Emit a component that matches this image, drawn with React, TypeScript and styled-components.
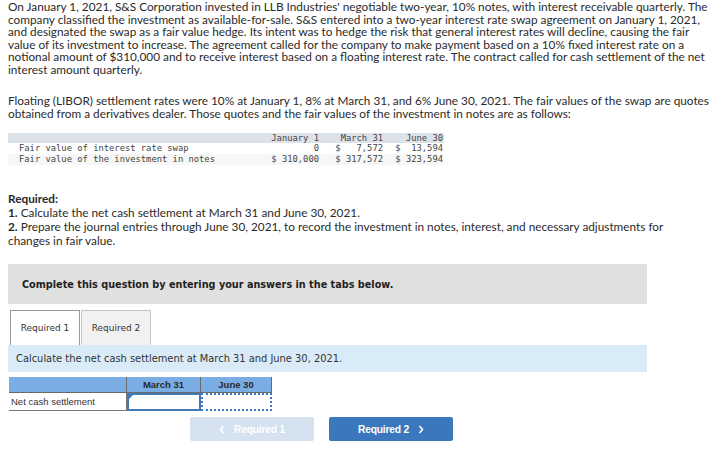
import React from "react";
import styled, { createGlobalStyle } from "styled-components";

const Global = createGlobalStyle`
  html, body { margin: 0; padding: 0; background: #fff; }
  body { font-family: Lato, "Open Sans", sans-serif; color: #2b2b2b; }
`;

const Page = styled.div`
  width: 725px;
  height: 459px;
  overflow: hidden;
  padding: 1px 8px 0 8px;
  box-sizing: border-box;
`;

const Para = styled.p<{ $mt?: number; $lh?: number }>`
  margin: ${(p) => p.$mt ?? 0}px 0 0 0;
  font-size: 11.8px;
  line-height: ${(p) => p.$lh ?? 12.5}px;
  white-space: nowrap;
`;

const DataTable = styled.table`
  margin-top: 13px;
  border-collapse: collapse;
  border-spacing: 0;
  table-layout: fixed;
  width: 436px;
  font-family: "DejaVu Sans Mono", monospace;
  font-size: 8.8px;
  color: #444;
`;

const HeadRow = styled.tr`
  background: #dde1ea;
`;

const BodyRow = styled.tr<{ $alt?: boolean }>`
  background: ${(p) => (p.$alt ? "#f7f7f7" : "#fff")};
`;

const Cell = styled.td<{ $left?: boolean; $h?: number }>`
  padding: 0 ${(p) => (p.$left ? 0 : 1)}px 0 ${(p) => (p.$left ? 11 : 0)}px;
  text-align: ${(p) => (p.$left ? "left" : "right")};
  white-space: pre;
  height: ${(p) => p.$h ?? 11}px;
  line-height: ${(p) => p.$h ?? 11}px;
  overflow: hidden;
`;

const ReqTitle = styled.div`
  margin-top: 27px;
  font-weight: 700;
  font-size: 11.8px;
  line-height: 14px;
`;

const Strong = styled.b`
  font-weight: 700;
`;

const GrayBox = styled.div`
  margin-top: 16px;
  width: 639px;
  height: 40px;
  background: #e0e0e0;
  display: flex;
  align-items: center;
  padding-left: 14px;
  box-sizing: border-box;
  font-family: "DejaVu Sans", Verdana, sans-serif;
  font-weight: 700;
  font-size: 9.7px;
  color: #222;
`;

const Tabs = styled.div`
  margin-top: 6px;
  display: flex;
  padding-left: 2px;
  gap: 1px;
`;

const Tab = styled.div<{ $active?: boolean }>`
  width: 70px;
  height: 35px;
  box-sizing: border-box;
  display: flex;
  align-items: center;
  justify-content: center;
  font-family: "DejaVu Sans", Verdana, sans-serif;
  font-size: 9px;
  color: #333;
  background: ${(p) => (p.$active ? "#fff" : "#f1f1f1")};
  border: 1px solid ${(p) => (p.$active ? "#9a9a9a" : "#c4c4c4")};
  border-bottom: none;
`;

const InfoBar = styled.div`
  width: 639px;
  height: 27px;
  background: #daebf8;
  display: flex;
  align-items: center;
  padding-left: 8px;
  box-sizing: border-box;
  font-family: "DejaVu Sans", Verdana, sans-serif;
  font-size: 9.9px;
  color: #333;
`;

const AnswerGrid = styled.div`
  margin-top: 5px;
  margin-left: 1px;
  display: grid;
  grid-template-columns: 118px 74px 71px;
  grid-template-rows: 16px 18px;
  font-family: "Liberation Sans", Arial, sans-serif;
  font-size: 9.5px;
`;

const HeadCell = styled.div<{ $divider?: boolean }>`
  background: #7aade4;
  display: flex;
  align-items: center;
  justify-content: center;
  font-weight: 700;
  color: #2a2a2a;
  border-right: ${(p) => (p.$divider ? "1px solid #6a6a6a" : "none")};
  border-bottom: 1px solid #6a6a6a;
  box-sizing: border-box;
`;

const LabelCell = styled.div`
  display: flex;
  align-items: center;
  padding-left: 2px;
  color: #333;
  border-bottom: 1px solid #777;
  border-right: 1px solid #777;
  box-sizing: border-box;
`;

const InputCell = styled.div<{ $dotted?: boolean }>`
  position: relative;
  box-sizing: border-box;
  border: ${(p) => (p.$dotted ? "2px dotted #3a78c9" : "2px solid #4479b8")};
  background: #fff;
`;

const Corner = styled.span`
  position: absolute;
  left: 0;
  top: 0;
  width: 0;
  height: 0;
  border-top: 4px solid #3a78c9;
  border-right: 4px solid transparent;
`;

const NavRow = styled.div`
  margin-top: 6px;
  display: flex;
  gap: 15px;
  padding-left: 182px;
`;

const NavButton = styled.div<{ $primary?: boolean }>`
  width: 124px;
  height: 24px;
  border-radius: 2px;
  background: ${(p) => (p.$primary ? "#3a77bc" : "#d5e2f0")};
  color: #fff;
  display: flex;
  align-items: center;
  justify-content: center;
  gap: 9px;
  font-family: "Liberation Sans", Arial, sans-serif;
  font-weight: 700;
  font-size: 10.3px;
  letter-spacing: -0.2px;
`;

const Chevron = ({ dir }: { dir: "l" | "r" }) => (
  <svg width="6" height="9" viewBox="0 0 6 9">
    <path
      d={dir === "l" ? "M4.5 1 L1.5 4.5 L4.5 8" : "M1.5 1 L4.5 4.5 L1.5 8"}
      fill="none"
      stroke="#fff"
      strokeWidth="1.6"
    />
  </svg>
);

export default function App() {
  return (
    <>
      <Global />
      <Page>
        <Para>
          On January 1, 2021, S&amp;S Corporation invested in LLB Industries' negotiable two-year, 10% notes, with interest receivable quarterly. The
          <br />
          company classified the investment as available-for-sale. S&amp;S entered into a two-year interest rate swap agreement on January 1, 2021,
          <br />
          and designated the swap as a fair value hedge. Its intent was to hedge the risk that general interest rates will decline, causing the fair
          <br />
          value of its investment to increase. The agreement called for the company to make payment based on a 10% fixed interest rate on a
          <br />
          notional amount of $310,000 and to receive interest based on a floating interest rate. The contract called for cash settlement of the net
          <br />
          interest amount quarterly.
        </Para>
        <Para $mt={19}>
          Floating (LIBOR) settlement rates were 10% at January 1, 8% at March 31, and 6% June 30, 2021. The fair values of the swap are quotes
          <br />
          obtained from a derivatives dealer. Those quotes and the fair values of the investment in notes are as follows:
        </Para>
        <DataTable>
          <colgroup>
            <col style={{ width: 250 }} />
            <col style={{ width: 62 }} />
            <col style={{ width: 64 }} />
            <col style={{ width: 60 }} />
          </colgroup>
          <tbody>
            <HeadRow>
              <Cell $left $h={10} />
              <Cell $h={10}>January 1</Cell>
              <Cell $h={10}>March 31</Cell>
              <Cell $h={10}>June 30</Cell>
            </HeadRow>
            <BodyRow>
              <Cell $left>Fair value of interest rate swap</Cell>
              <Cell>0</Cell>
              <Cell>{"$   7,572"}</Cell>
              <Cell>{"$  13,594"}</Cell>
            </BodyRow>
            <BodyRow $alt>
              <Cell $left>Fair value of the investment in notes</Cell>
              <Cell>$ 310,000</Cell>
              <Cell>$ 317,572</Cell>
              <Cell>$ 323,594</Cell>
            </BodyRow>
          </tbody>
        </DataTable>
        <ReqTitle>Required:</ReqTitle>
        <Para $lh={14}>
          <Strong>1.</Strong> Calculate the net cash settlement at March 31 and June 30, 2021.
          <br />
          <Strong>2.</Strong> Prepare the journal entries through June 30, 2021, to record the investment in notes, interest, and necessary adjustments for
          <br />
          changes in fair value.
        </Para>
        <GrayBox>Complete this question by entering your answers in the tabs below.</GrayBox>
        <Tabs>
          <Tab $active>Required 1</Tab>
          <Tab>Required 2</Tab>
        </Tabs>
        <InfoBar>Calculate the net cash settlement at March 31 and June 30, 2021.</InfoBar>
        <AnswerGrid>
          <HeadCell $divider />
          <HeadCell $divider>March 31</HeadCell>
          <HeadCell $divider>June 30</HeadCell>
          <LabelCell>Net cash settlement</LabelCell>
          <InputCell>
            <Corner />
          </InputCell>
          <InputCell $dotted />
        </AnswerGrid>
        <NavRow>
          <NavButton>
            <Chevron dir="l" />
            Required 1
          </NavButton>
          <NavButton $primary>
            Required 2
            <Chevron dir="r" />
          </NavButton>
        </NavRow>
      </Page>
    </>
  );
}
